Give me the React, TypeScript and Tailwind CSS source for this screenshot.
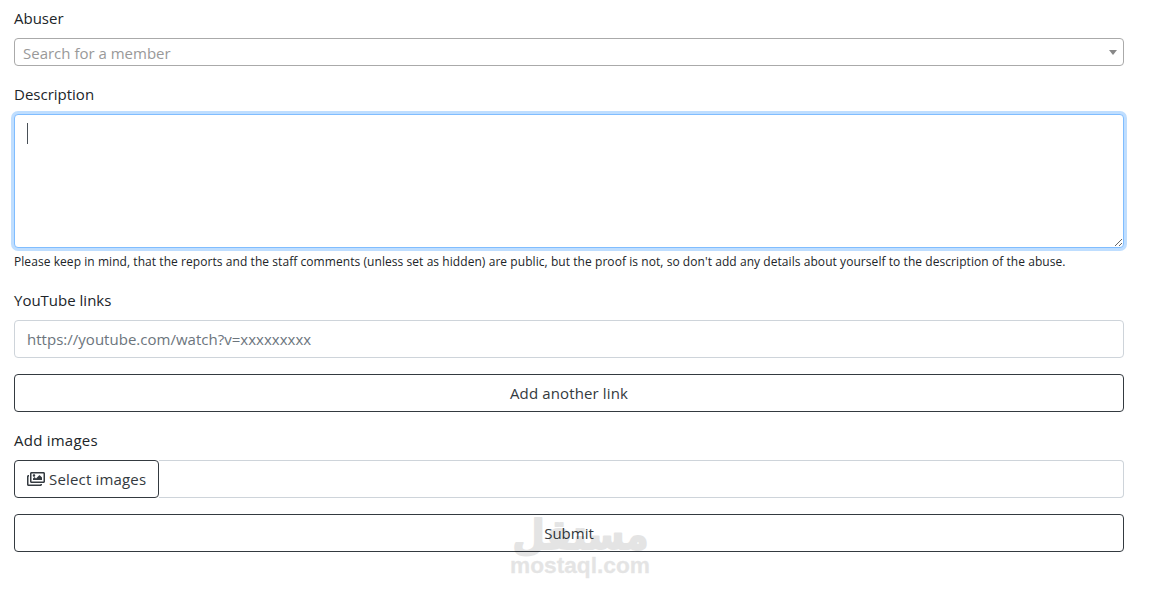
import { useState } from "react";

interface FieldLabelProps {
  htmlFor: string;
  className?: string;
  children: string;
}

function FieldLabel({ htmlFor, className = "", children }: FieldLabelProps) {
  return (
    <label htmlFor={htmlFor} className="mb-2 block h-6 leading-6">
      <span className={className}>{children}</span>
    </label>
  );
}

function ImagesIcon() {
  return (
    <svg viewBox="0 0 576 512" className="h-4 w-[18px] shrink-0" fill="currentColor" aria-hidden="true">
      <path d="M480 416v16c0 26.510-21.490 48-48 48H48c-26.510 0-48-21.490-48-48V176c0-26.510 21.490-48 48-48h16v48H54a6 6 0 0 0-6 6v244a6 6 0 0 0 6 6h372a6 6 0 0 0 6-6v-10h48zm42-336H150a6 6 0 0 0-6 6v244a6 6 0 0 0 6 6h372a6 6 0 0 0 6-6V86a6 6 0 0 0-6-6zm6-48c26.510 0 48 21.490 48 48v256c0 26.510-21.490 48-48 48H144c-26.510 0-48-21.490-48-48V80c0-26.510 21.490-48 48-48h384zM264 144c0 22.091-17.909 40-40 40s-40-17.909-40-40 17.909-40 40-40 40 17.909 40 40zm-72 96l39.515-39.515c4.686-4.686 12.284-4.686 16.971 0L288 240l103.515-103.515c4.686-4.686 12.284-4.686 16.971 0L480 208v80H192v-48z" />
    </svg>
  );
}

function Watermark() {
  return (
    <svg
      viewBox="0 0 150 80"
      className="pointer-events-none absolute top-[505px] left-[505px] h-20 w-[150px] opacity-10"
      aria-hidden="true"
    >
      <text
        x="7.5"
        y="43.5"
        fontSize="41"
        fontWeight="700"
        stroke="#000"
        strokeWidth="2"
        strokeLinejoin="round"
        textLength="136"
        lengthAdjust="spacingAndGlyphs"
        className="[font-family:'DejaVu_Sans',sans-serif]"
      >
        مستقل
      </text>
      <text
        x="5"
        y="68"
        fontSize="22"
        fontWeight="700"
        stroke="#000"
        strokeWidth="0.4"
        strokeLinejoin="round"
        textLength="140"
        lengthAdjust="spacingAndGlyphs"
        className="[font-family:'Liberation_Sans',sans-serif]"
      >
        mostaql.com
      </text>
    </svg>
  );
}

export default function App() {
  const [description, setDescription] = useState("");
  const [links, setLinks] = useState([""]);

  return (
    <div className="relative h-[590px] overflow-hidden bg-white pt-1.5 pr-[37px] pl-3.5 text-[15px] text-[#212529] [font-family:'Open_Sans',sans-serif]">
      <form onSubmit={(e) => e.preventDefault()}>
        <div className="mb-4">
          <FieldLabel htmlFor="abuser">Abuser</FieldLabel>
          <button
            id="abuser"
            type="button"
            className="flex h-7 w-full items-center justify-between rounded-[4px] border border-[#aaa] bg-white pr-1.5 pl-2 text-[#999]"
          >
            <span className="mt-0.5">Search for a member</span>
            <span className="border-x-4 border-t-[5px] border-x-transparent border-t-[#888]" />
          </button>
        </div>

        <div className="mb-4">
          <FieldLabel htmlFor="description">Description</FieldLabel>
          <div className="relative h-[134px]">
            <textarea
              id="description"
              value={description}
              onChange={(e) => setDescription(e.target.value)}
              className="block h-full w-full resize rounded border border-[#80bdff] bg-white px-3 py-1.5 shadow-[0_0_0_3px_#bfdeff] outline-none"
            />
            {description === "" && (
              <span className="pointer-events-none absolute top-[9px] left-[13px] h-[21px] w-px bg-[#495057]" />
            )}
          </div>
          <small className="mt-1 block h-5 text-[12px] leading-5 tracking-[0.062px] whitespace-nowrap">
            <span>
              Please keep in mind, that the reports and the staff comments (unless set as hidden) are public, but the
              proof is not, so don&apos;t add any details about yourself to the description of the abuse.
            </span>
          </small>
        </div>

        <div className="mb-4">
          <FieldLabel htmlFor="link-0">YouTube links</FieldLabel>
          <div className="space-y-4">
            {links.map((link, i) => (
              <input
                key={i}
                id={`link-${i}`}
                type="text"
                value={link}
                onChange={(e) => setLinks(links.map((l, j) => (j === i ? e.target.value : l)))}
                placeholder="https://youtube.com/watch?v=xxxxxxxxx"
                className="block h-[38px] w-full rounded border border-[#ced4da] px-3 py-1.5 tracking-[0.02px] placeholder:text-[#6c757d]"
              />
            ))}
            <button
              type="button"
              onClick={() => setLinks([...links, ""])}
              className="block h-[38px] w-full rounded border border-[#343a40] tracking-[0.13px] text-[#343a40]"
            >
              <span>Add another link</span>
            </button>
          </div>
        </div>

        <div className="mb-4">
          <FieldLabel htmlFor="images" className="tracking-[0.24px]">
            Add images
          </FieldLabel>
          <div className="flex h-[38px]">
            <button
              id="images"
              type="button"
              className="flex w-[145px] shrink-0 items-center gap-1 rounded border border-[#343a40] pl-3 tracking-[0.17px] whitespace-nowrap text-[#343a40]"
            >
              <ImagesIcon />
              <span>Select images</span>
            </button>
            <div className="flex-1 rounded-r border border-l-0 border-[#ced4da]" />
          </div>
        </div>

        <button type="submit" className="block h-[38px] w-full rounded border border-[#343a40] text-[#343a40]">
          <span>Submit</span>
        </button>
      </form>
      <Watermark />
    </div>
  );
}
